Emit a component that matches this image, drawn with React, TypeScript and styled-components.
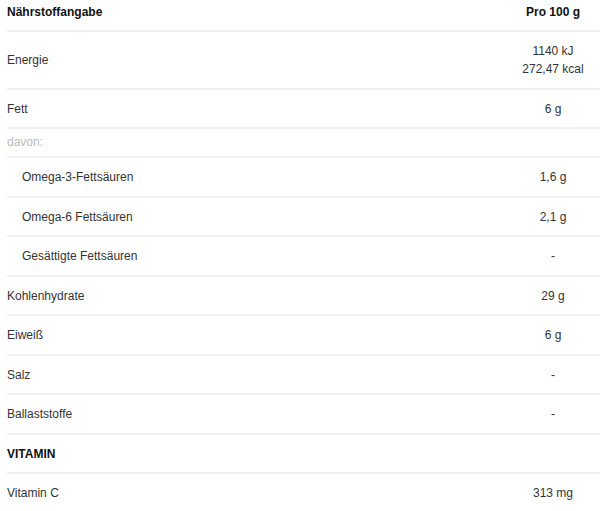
import React from 'react'
import styled, { createGlobalStyle } from 'styled-components'

type Row = {
  label: string;
  value?: string[];
  kind?: 'normal' | 'sub' | 'note' | 'section';
}

const rows: Row[] = [
  { label: 'Energie', value: ['1140 kJ', '272,47 kcal'] },
  { label: 'Fett', value: ['6 g'] },
  { label: 'davon:', kind: 'note' },
  { label: 'Omega-3-Fettsäuren', value: ['1,6 g'], kind: 'sub' },
  { label: 'Omega-6 Fettsäuren', value: ['2,1 g'], kind: 'sub' },
  { label: 'Gesättigte Fettsäuren', value: ['-'], kind: 'sub' },
  { label: 'Kohlenhydrate', value: ['29 g'] },
  { label: 'Eiweiß', value: ['6 g'] },
  { label: 'Salz', value: ['-'] },
  { label: 'Ballaststoffe', value: ['-'] },
  { label: 'VITAMIN', kind: 'section' },
  { label: 'Vitamin C', value: ['313 mg'] },
]

const GlobalStyle = createGlobalStyle`
  body {
    margin: 0;
    background: #fff;
    font-family: "Liberation Sans", Arial, sans-serif;
    font-size: 12px;
    color: #333;
  }
`

const Wrapper = styled.div`
  padding-left: 7px;
`

const Table = styled.div`
  display: grid;
  grid-template-columns: 1fr 94px;
`

const HeadCell = styled.div<{ $value?: boolean }>`
  padding: 3px 0 9px;
  line-height: 18px;
  font-weight: bold;
  color: #111;
  text-align: ${p => (p.$value ? 'center' : 'left')};
  border-bottom: 2px solid #f0f0f0;
`

const Cell = styled.div<{ $kind: string; $value?: boolean }>`
  display: flex;
  flex-direction: column;
  justify-content: center;
  padding: ${p => (p.$kind === 'note' ? '4px 0 5px' : '10px 0 9.5px')};
  line-height: 18px;
  border-bottom: 2px solid #f0f0f0;
  text-align: ${p => (p.$value ? 'center' : 'left')};
  padding-left: ${p => (p.$kind === 'sub' && !p.$value ? '15px' : '0')};
  color: ${p => (p.$kind === 'note' ? '#bbb' : p.$kind === 'section' ? '#111' : '#333')};
  font-weight: ${p => (p.$kind === 'section' ? 'bold' : 'normal')};
`

export default function App() {
  return (
    <Wrapper>
      <GlobalStyle />
      <Table>
        <HeadCell>Nährstoffangabe</HeadCell>
        <HeadCell $value>Pro 100 g</HeadCell>
        {rows.map(row => {
          const kind = row.kind || 'normal'
          return (
            <React.Fragment key={row.label}>
              <Cell $kind={kind}>{row.label}</Cell>
              <Cell $kind={kind} $value>
                {(row.value || []).map(v => <span key={v}>{v}</span>)}
              </Cell>
            </React.Fragment>
          )
        })}
      </Table>
    </Wrapper>
  )
}
